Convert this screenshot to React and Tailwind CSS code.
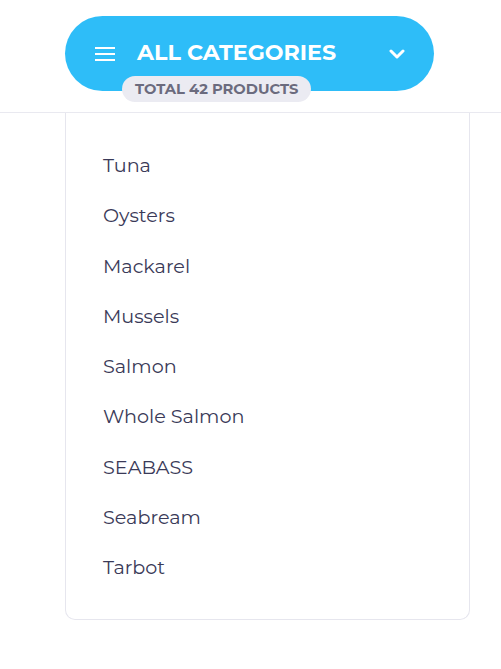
const items = ['Tuna', 'Oysters', 'Mackarel', 'Mussels', 'Salmon', 'Whole Salmon', 'SEABASS', 'Seabream', 'Tarbot'];

export default function App() {
  return (
    <div className="min-h-[669px] bg-white" style={{ fontFamily: 'Montserrat, Inter, "Open Sans", sans-serif' }}>
      <div className="h-[113px] border-b border-[#e9e9f0] pt-4">
        <div className="relative ml-[65px] flex h-[75px] w-[369px] items-center rounded-full bg-[#2ebdf8] pl-[29px] pr-[29px] text-white">
          <svg width="22" height="16" viewBox="0 0 22 16" fill="none" stroke="white" strokeWidth="2">
            <line x1="1" y1="2" x2="21" y2="2" />
            <line x1="1" y1="8" x2="21" y2="8" />
            <line x1="1" y1="14" x2="21" y2="14" />
          </svg>
          <span className="ml-[21px] -mt-[1px] text-[22.2px] font-bold">ALL CATEGORIES</span>
          <svg className="ml-auto" width="16" height="10" viewBox="0 0 16 10" fill="none" stroke="white" strokeWidth="3" strokeLinecap="round" strokeLinejoin="round">
            <polyline points="2,2 8,8 14,2" />
          </svg>
          <div className="absolute left-[57px] top-[60px] flex h-[26px] items-center rounded-full bg-[#ebebf2] px-[13px] text-[14.7px] font-bold text-[#6b6b7e]">
            TOTAL 42 PRODUCTS
          </div>
        </div>
      </div>
      <div className="ml-[65px] w-[405px] rounded-b-[10px] border border-t-0 border-[#e6e6ee] pt-[27px] pb-[27px] pl-[37px]">
        {items.map((it) => (
          <div key={it} className="h-[50.25px] leading-[50px] text-[19.2px] text-[#3a3a58]">
            {it}
          </div>
        ))}
      </div>
    </div>
  );
}
